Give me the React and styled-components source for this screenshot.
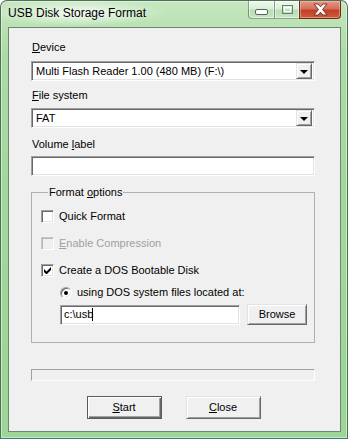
import React from 'react';
import styled, { createGlobalStyle, css } from 'styled-components';

const Global = createGlobalStyle`
  html, body { margin: 0; padding: 0; background: #ffffff; }
  body { width: 348px; height: 439px; overflow: hidden; font-family: "Liberation Sans", Arial, sans-serif; }
  * { box-sizing: border-box; }
`;

const Window = styled.div`
  width: 348px;
  height: 439px;
  display: flex;
  flex-direction: column;
  border: 1px solid #4f7058;
  border-bottom-color: #3e7a86;
  border-radius: 7px 7px 0 0;
  padding: 0 6px 6px 7px;
  background: linear-gradient(180deg, #c6e7c0 0%, #acdca5 12%, #a3d89c 40%, #9cd595 100%);
  box-shadow: inset 0 0 0 1px rgba(255, 255, 255, 0.45);
  overflow: hidden;
`;

const TitleBar = styled.div`
  height: 26px;
  flex: none;
  display: flex;
  align-items: flex-start;
  justify-content: space-between;
  margin: 0 -6px 0 -7px;
  padding: 0 6px 0 7px;
  background: radial-gradient(ellipse 90px 13px at 76px 12px, rgba(255,255,255,0.85), rgba(255,255,255,0));
`;

const Title = styled.div`
  padding-top: 5px;
  font-size: 12px;
  line-height: 14px;
  color: #000;
  white-space: nowrap;
`;

const CaptionGroup = styled.div`
  display: flex;
  height: 18px;
`;

const CaptionButton = styled.div`
  height: 18px;
  width: ${p => p.$w}px;
  display: flex;
  align-items: center;
  justify-content: center;
  border: 1px solid rgba(60, 90, 70, 0.55);
  border-top: none;
  ${p => p.$kind === 'min' && css`
    border-radius: 0 0 0 4px;
    border-right: none;
  `}
  ${p => p.$kind === 'max' && css`
    border-right: none;
  `}
  ${p => p.$kind === 'close' ? css`
    border-radius: 0 0 4px 0;
    border-color: #6b2a20;
    background: linear-gradient(180deg, #e79884 0%, #d66e58 45%, #c23f27 55%, #d05b3d 100%);
    box-shadow: inset 0 0 0 1px rgba(255, 210, 200, 0.45);
  ` : css`
    background: linear-gradient(180deg, rgba(255,255,255,0.7) 0%, rgba(232,246,230,0.6) 45%, rgba(180,215,178,0.6) 55%, rgba(200,230,196,0.65) 100%);
    box-shadow: inset 0 0 0 1px rgba(255, 255, 255, 0.5);
  `}
`;

const Client = styled.div`
  flex: 1;
  display: flex;
  flex-direction: column;
  background: #f0f0f0;
  border: 1px solid #6b8872;
  padding: 13px 25px 0 22px;
  font-size: 11px;
  line-height: 13px;
  color: #000;
`;

const U = styled.span`
  text-decoration: underline;
  text-underline-offset: 1px;
`;

const Label = styled.div`
  height: 13px;
  margin-top: ${p => p.$mt || 0}px;
  padding-left: 1px;
  white-space: nowrap;
`;

const sunken = css`
  border: 1px solid;
  border-color: #a0a0a0 #ffffff #ffffff #a0a0a0;
  box-shadow: inset 1px 1px 0 #696969, inset -1px -1px 0 #e3e3e3;
`;

const SelectBox = styled.div`
  ${sunken};
  height: 20px;
  margin-top: ${p => p.$mt || 0}px;
  background: #ffffff;
  display: flex;
  align-items: center;
  padding: 2px 2px 2px 4px;
`;

const SelectText = styled.div`
  flex: 1;
  white-space: nowrap;
  overflow: hidden;
`;

const raised = css`
  border: 1px solid;
  border-color: #e3e3e3 #696969 #696969 #e3e3e3;
  box-shadow: inset 1px 1px 0 #ffffff, inset -1px -1px 0 #a0a0a0;
  background: #f0f0f0;
`;

const DropButton = styled.div`
  ${raised};
  width: 16px;
  height: 16px;
  display: flex;
  align-items: center;
  justify-content: center;
`;

const Arrow = styled.div`
  width: 0;
  height: 0;
  border-left: 4px solid transparent;
  border-right: 4px solid transparent;
  border-top: 4px solid #000;
  margin-top: 1px;
`;

const TextBox = styled.div`
  ${sunken};
  height: 20px;
  width: ${p => (p.$w ? `${p.$w}px` : 'auto')};
  margin-top: ${p => p.$mt || 0}px;
  background: #ffffff;
  display: flex;
  align-items: center;
  padding: 0 3px;
  white-space: nowrap;
`;

const Caret = styled.span`
  display: inline-block;
  width: 1px;
  height: 13px;
  background: #000;
  margin-left: -1px;
`;

const Group = styled.fieldset`
  margin: 10px 0 0 0;
  padding: 11px 0 17px 9px;
  border: 1px solid #b0b0b0;
  min-width: 0;
  display: flex;
  flex-direction: column;
`;

const Legend = styled.legend`
  margin-left: 7px;
  padding: 0 1px;
  height: 13px;
  line-height: 13px;
`;

const Row = styled.div`
  display: flex;
  align-items: center;
  height: ${p => p.$h || 13}px;
  margin-top: ${p => p.$mt || 0}px;
  margin-left: ${p => p.$ml || 0}px;
  gap: ${p => p.$gap || 5}px;
  color: ${p => (p.$disabled ? '#a0a0a0' : '#000')};
  white-space: nowrap;
`;

const CheckBox = styled.div`
  ${sunken};
  width: 13px;
  height: 13px;
  flex: none;
  display: flex;
  align-items: center;
  justify-content: center;
  background: ${p => (p.$disabled ? '#f0f0f0' : '#ffffff')};
  ${p => p.$disabled && css`
    border-color: #c8c8c8 #ffffff #ffffff #c8c8c8;
    box-shadow: inset 1px 1px 0 #b4b4b4, inset -1px -1px 0 #ececec;
  `}
`;

const Radio = styled.div`
  width: 12px;
  height: 12px;
  flex: none;
  border-radius: 50%;
  border: 1px solid;
  border-color: #a0a0a0 #ffffff #ffffff #a0a0a0;
  box-shadow: inset 1px 1px 0 #696969, inset -1px -1px 0 #e3e3e3;
  background: #ffffff;
  display: flex;
  align-items: center;
  justify-content: center;
`;

const Dot = styled.div`
  width: 4px;
  height: 4px;
  border-radius: 50%;
  background: #000;
`;

const PushButton = styled.div`
  ${raised};
  width: ${p => p.$w}px;
  height: ${p => p.$h}px;
  display: flex;
  align-items: center;
  justify-content: center;
  white-space: nowrap;
  ${p => p.$default && css`
    border: 1px solid #5a5a5a;
    box-shadow: inset 1px 1px 0 #ffffff, inset -1px -1px 0 #696969, inset -2px -2px 0 #a0a0a0;
  `}
`;

const Progress = styled.div`
  ${sunken};
  box-shadow: none;
  height: 12px;
  margin-top: 26px;
  background: #f0f0f0;
`;

const ButtonRow = styled.div`
  display: flex;
  justify-content: center;
  gap: 24px;
  margin-top: 15px;
  padding-left: 1px;
`;

function Select({ children, mt }) {
  return (
    <SelectBox $mt={mt}>
      <SelectText>{children}</SelectText>
      <DropButton><Arrow /></DropButton>
    </SelectBox>
  );
}

function Check({ checked, disabled, children, mt }) {
  return (
    <Row $mt={mt} $disabled={disabled}>
      <CheckBox $disabled={disabled}>
        {checked && (
          <svg width="7" height="7" viewBox="0 0 7 7">
            <path d="M0 2v3l2 2h1l4-4V0L2.5 4.5z" fill="#000" />
          </svg>
        )}
      </CheckBox>
      <span>{children}</span>
    </Row>
  );
}

export default function App() {
  return (
    <>
      <Global />
      <Window>
        <TitleBar>
          <Title>USB Disk Storage Format</Title>
          <CaptionGroup>
            <CaptionButton $kind="min" $w={26}>
              <svg width="13" height="6" viewBox="0 0 13 6" style={{ marginTop: 5 }}>
                <rect x="0.5" y="0.5" width="12" height="5" rx="1.5" fill="#fff" stroke="#55665a" />
              </svg>
            </CaptionButton>
            <CaptionButton $kind="max" $w={25}>
              <svg width="11" height="9" viewBox="0 0 11 9">
                <rect x="0.5" y="0.5" width="10" height="8" fill="none" stroke="#6c7d70" />
                <rect x="2.5" y="2.5" width="6" height="4" fill="none" stroke="#ffffff" />
              </svg>
            </CaptionButton>
            <CaptionButton $kind="close" $w={42}>
              <svg width="17" height="13" viewBox="0 0 17 13">
                <path d="M2 1h4l2.5 2.8L11 1h4l-4.5 5.5L15 12h-4L8.5 9.2 6 12H2l4.5-5.5z" fill="#fff" stroke="#6a2a1e" strokeWidth="0.9" strokeLinejoin="round" />
              </svg>
            </CaptionButton>
          </CaptionGroup>
        </TitleBar>
        <Client>
          <Label><U>D</U>evice</Label>
          <Select mt={7}>Multi Flash Reader 1.00 (480 MB) (F:\)</Select>
          <Label $mt={8}><U>F</U>ile system</Label>
          <Select mt={6}>FAT</Select>
          <Label $mt={10}>Volume <U>l</U>abel</Label>
          <TextBox $mt={5} />
          <Group>
            <Legend>Format <U>o</U>ptions</Legend>
            <Check>Quick Format</Check>
            <Check mt={14} disabled><U>E</U>nable Compression</Check>
            <Check mt={14} checked>Create a DOS Bootable Disk</Check>
            <Row $mt={9} $ml={19}>
              <Radio><Dot /></Radio>
              <span>using DOS system files located at:</span>
            </Row>
            <Row $mt={5} $ml={19} $h={21} $gap={7}>
              <TextBox $w={180}>c:\usb<Caret /></TextBox>
              <PushButton $w={60} $h={21}>Browse</PushButton>
            </Row>
          </Group>
          <Progress />
          <ButtonRow>
            <PushButton $default $w={75} $h={23}><span><U>S</U>tart</span></PushButton>
            <PushButton $w={75} $h={23}><span><U>C</U>lose</span></PushButton>
          </ButtonRow>
        </Client>
      </Window>
    </>
  );
}
